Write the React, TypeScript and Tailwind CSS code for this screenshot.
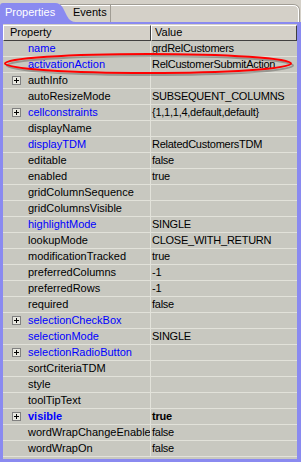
import React from 'react';

type Prop = {
  name: string;
  value?: string;
  blue?: boolean;
  expand?: boolean;
  bold?: boolean;
};

const props: Prop[] = [
  { name: 'name', value: 'grdRelCustomers', blue: true },
  { name: 'activationAction', value: 'RelCustomerSubmitAction', blue: true },
  { name: 'authInfo', expand: true },
  { name: 'autoResizeMode', value: 'SUBSEQUENT_COLUMNS' },
  { name: 'cellconstraints', value: '{1,1,1,4,default,default}', blue: true, expand: true },
  { name: 'displayName' },
  { name: 'displayTDM', value: 'RelatedCustomersTDM', blue: true },
  { name: 'editable', value: 'false' },
  { name: 'enabled', value: 'true' },
  { name: 'gridColumnSequence' },
  { name: 'gridColumnsVisible' },
  { name: 'highlightMode', value: 'SINGLE', blue: true },
  { name: 'lookupMode', value: 'CLOSE_WITH_RETURN' },
  { name: 'modificationTracked', value: 'true' },
  { name: 'preferredColumns', value: '-1' },
  { name: 'preferredRows', value: '-1' },
  { name: 'required', value: 'false' },
  { name: 'selectionCheckBox', blue: true, expand: true },
  { name: 'selectionMode', value: 'SINGLE', blue: true },
  { name: 'selectionRadioButton', blue: true, expand: true },
  { name: 'sortCriteriaTDM' },
  { name: 'style' },
  { name: 'toolTipText' },
  { name: 'visible', value: 'true', blue: true, expand: true, bold: true },
  { name: 'wordWrapChangeEnabled', value: 'false' },
  { name: 'wordWrapOn', value: 'false' },
];

function PlusBox() {
  return (
    <div className="w-[9px] h-[9px] border border-[#808080] bg-[#e8e8e0] flex items-center justify-center">
      <svg width="7" height="7" viewBox="0 0 7 7">
        <path d="M1 3.5h5M3.5 1v5" stroke="#000" strokeWidth="1" shapeRendering="crispEdges" />
      </svg>
    </div>
  );
}

function Row({ p }: { p: Prop }) {
  return (
    <div className="flex h-[16px] border-b border-[#e2e2da]">
      <div className="w-[24px] shrink-0 flex items-center justify-center pl-[2px]">
        {p.expand && <PlusBox />}
      </div>
      <div
        className={`w-[124px] shrink-0 pl-[1px] border-r border-[#e2e2da] overflow-hidden whitespace-nowrap leading-[15px] ${
          p.blue ? 'text-[#0000ff]' : 'text-black'
        } ${p.bold ? 'font-bold' : ''}`}
      >
        {p.name}
      </div>
      <div
        className={`flex-1 min-w-0 pl-[1px] overflow-hidden whitespace-nowrap leading-[15px] tracking-[-0.25px] text-black ${
          p.bold ? 'font-bold' : ''
        }`}
      >
        {p.value}
      </div>
    </div>
  );
}

export default function App() {
  return (
    <div
      className="relative w-[301px] h-[462px] bg-[#d4d0c8] text-[11px] overflow-hidden"
      style={{ fontFamily: '"Liberation Sans", Arial, sans-serif' }}
    >
      {/* Tab strip */}
      <div className="relative h-[22px]">
        <svg className="absolute inset-0" width="301" height="22" viewBox="0 0 301 22">
          <path d="M60 4.5 H293 Q299.5 4.5 299.5 11 V22" fill="none" stroke="#a09c94" />
          <path d="M60 5.5 H293 Q298.5 5.5 298.5 11 V22" fill="none" stroke="#ffffff" />
          <path d="M110.5 5 V22" stroke="#a09c94" />
          <path d="M0 22 V6 Q0 3 3 3 H55 Q60 3 63 8 L67 16 Q70 22 76 22 Z" fill="#8a8af0" />
        </svg>
        <div className="relative flex items-center h-full">
          <span className="pl-[5px] w-[71px] text-white leading-[22px] pt-[2px]">Properties</span>
          <span className="pl-[2px] text-black leading-[22px] pt-[2px]">Events</span>
        </div>
      </div>

      {/* Panel */}
      <div className="flex flex-col border-[#8a8af0] border-l-[3px] border-r-[4px] border-t-[2px] border-b-[3px] h-[440px] pt-[1px]">
        <div className="flex h-[16px]">
          <div className="w-[148px] bg-[#d4d0c8] border-t border-l border-white border-b border-r border-b-[#404040] border-r-[#404040] pl-[6px] leading-[13px] text-black">
            Property
          </div>
          <div className="flex-1 bg-[#d4d0c8] border-t border-l border-white border-b border-r border-b-[#404040] border-r-[#404040] pl-[3px] leading-[13px] text-black">
            Value
          </div>
        </div>
        <div className="flex-1 bg-[#c8c8c0]">
          {props.map((p) => (
            <Row key={p.name} p={p} />
          ))}
        </div>
      </div>

      {/* Hand-drawn highlight around activationAction */}
      <svg className="absolute top-0 left-0 pointer-events-none" width="301" height="462" viewBox="0 0 301 462">
        <ellipse cx="150" cy="65.5" rx="143" ry="9.5" fill="none" stroke="#000" strokeOpacity="0.25" strokeWidth="2" />
        <ellipse cx="148" cy="63.5" rx="143" ry="9.5" fill="none" stroke="#ff0000" strokeWidth="2" />
      </svg>
    </div>
  );
}
